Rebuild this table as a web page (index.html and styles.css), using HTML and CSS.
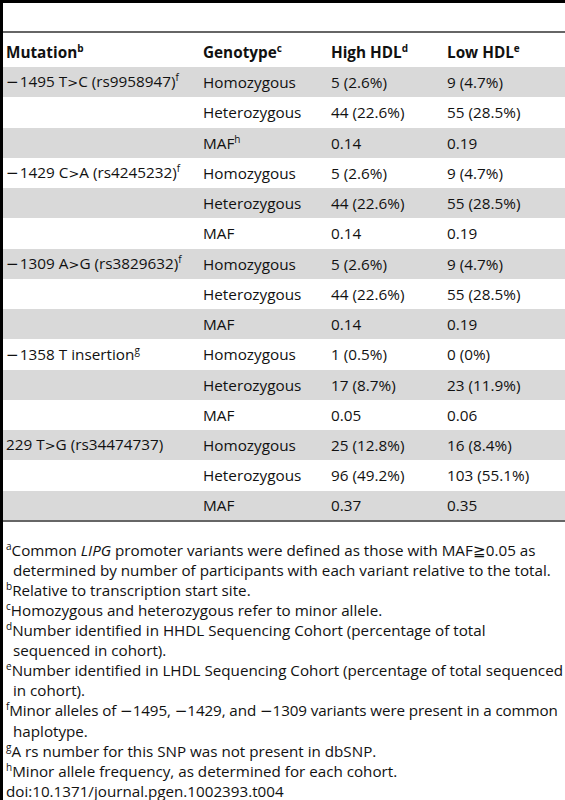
FILE: index.html
```html
<!DOCTYPE html>
<html>
<head>
<meta charset="utf-8">
<link rel="stylesheet" href="styles.css">
</head>
<body>
<div class="frame">
  <div class="spacer"></div>
  <table class="data">
    <colgroup>
      <col class="c1"><col class="c2"><col class="c3"><col class="c4">
    </colgroup>
    <thead>
      <tr><th>Mutation<sup>b</sup></th><th>Genotype<sup>c</sup></th><th>High HDL<sup>d</sup></th><th>Low HDL<sup>e</sup></th></tr>
    </thead>
    <tbody>
      <tr class="g"><td><span class="mn">−</span>1495 T<span class="gt">&gt;</span>C (rs9958947)<sup>f</sup></td><td>Homozygous</td><td>5 (2.6%)</td><td>9 (4.7%)</td></tr>
      <tr><td></td><td>Heterozygous</td><td>44 (22.6%)</td><td>55 (28.5%)</td></tr>
      <tr class="g"><td></td><td>MAF<sup>h</sup></td><td>0.14</td><td>0.19</td></tr>
      <tr><td><span class="mn">−</span>1429 C<span class="gt">&gt;</span>A (rs4245232)<sup>f</sup></td><td>Homozygous</td><td>5 (2.6%)</td><td>9 (4.7%)</td></tr>
      <tr class="g"><td></td><td>Heterozygous</td><td>44 (22.6%)</td><td>55 (28.5%)</td></tr>
      <tr><td></td><td>MAF</td><td>0.14</td><td>0.19</td></tr>
      <tr class="g"><td><span class="mn">−</span>1309 A<span class="gt">&gt;</span>G (rs3829632)<sup>f</sup></td><td>Homozygous</td><td>5 (2.6%)</td><td>9 (4.7%)</td></tr>
      <tr><td></td><td>Heterozygous</td><td>44 (22.6%)</td><td>55 (28.5%)</td></tr>
      <tr class="g"><td></td><td>MAF</td><td>0.14</td><td>0.19</td></tr>
      <tr><td><span class="mn">−</span>1358 T insertion<sup>g</sup></td><td>Homozygous</td><td>1 (0.5%)</td><td>0 (0%)</td></tr>
      <tr class="g"><td></td><td>Heterozygous</td><td>17 (8.7%)</td><td>23 (11.9%)</td></tr>
      <tr><td></td><td>MAF</td><td>0.05</td><td>0.06</td></tr>
      <tr class="g"><td>229 T<span class="gt">&gt;</span>G (rs34474737)</td><td>Homozygous</td><td>25 (12.8%)</td><td>16 (8.4%)</td></tr>
      <tr><td></td><td>Heterozygous</td><td>96 (49.2%)</td><td>103 (55.1%)</td></tr>
      <tr class="g"><td></td><td>MAF</td><td>0.37</td><td>0.35</td></tr>
    </tbody>
  </table>
  <div class="notes">
    <div class="line"><sup>a</sup>Common <i>LIPG</i> promoter variants were defined as those with MAF≧0.05 as</div>
    <div class="line cont">determined by number of participants with each variant relative to the total.</div>
    <div class="line"><sup>b</sup>Relative to transcription start site.</div>
    <div class="line"><sup>c</sup>Homozygous and heterozygous refer to minor allele.</div>
    <div class="line"><sup>d</sup>Number identified in HHDL Sequencing Cohort (percentage of total</div>
    <div class="line cont">sequenced in cohort).</div>
    <div class="line"><sup>e</sup>Number identified in LHDL Sequencing Cohort (percentage of total sequenced</div>
    <div class="line cont">in cohort).</div>
    <div class="line tight"><sup>f</sup>Minor alleles of <span class="mn">−</span>1495, <span class="mn">−</span>1429, and <span class="mn">−</span>1309 variants were present in a common</div>
    <div class="line cont">haplotype.</div>
    <div class="line"><sup>g</sup>A rs number for this SNP was not present in dbSNP.</div>
    <div class="line"><sup>h</sup>Minor allele frequency, as determined for each cohort.</div>
    <div class="line">doi:10.1371/journal.pgen.1002393.t004</div>
  </div>
</div>
</body>
</html>
```
FILE: styles.css
```css
html, body {
  margin: 0;
  padding: 0;
  background: #fff;
}
body {
  font-family: "Open Sans", "Liberation Sans", sans-serif;
  color: #111;
  width: 565px;
  height: 800px;
  overflow: hidden;
}
.frame {
  border-left: 3px solid #000;
  border-top: 3px solid #000;
  height: 797px;
  overflow: hidden;
}
.spacer {
  height: 28px;
}
.data {
  width: 562px;
  border-collapse: collapse;
  table-layout: fixed;
  font-size: 15.3px;
  border-top: 2px solid #666;
  border-bottom: 2px solid #666;
}
.c1 { width: 197px; }
.c2 { width: 128px; }
.c3 { width: 116px; }
.c4 { width: 121px; }
th {
  text-align: left;
  font-weight: 700;
  height: 35px;
  padding: 3px 0 0 3px;
  box-sizing: border-box;
  vertical-align: middle;
  white-space: nowrap;
}
td {
  height: 30.25px;
  padding: 0 0 0 3px;
  box-sizing: border-box;
  vertical-align: middle;
  white-space: nowrap;
  line-height: 18px;
}
tr.g td {
  background: #d9d9d9;
}
sup {
  font-size: 10px;
  line-height: 0;
  vertical-align: 6px;
}
.gt {
  font-family: "DejaVu Sans", sans-serif;
  font-size: 13px;
}
.mn {
  font-family: "DejaVu Sans", sans-serif;
  margin-right: 1px;
}
.notes {
  margin-top: 18px;
  font-size: 15.2px;
  line-height: 20px;
  padding-left: 3px;
}
.notes .mn {
  margin-right: 0;
}
.line {
  white-space: nowrap;
}
.tight {
  letter-spacing: -0.1px;
}
.cont {
  padding-left: 7px;
}
```
